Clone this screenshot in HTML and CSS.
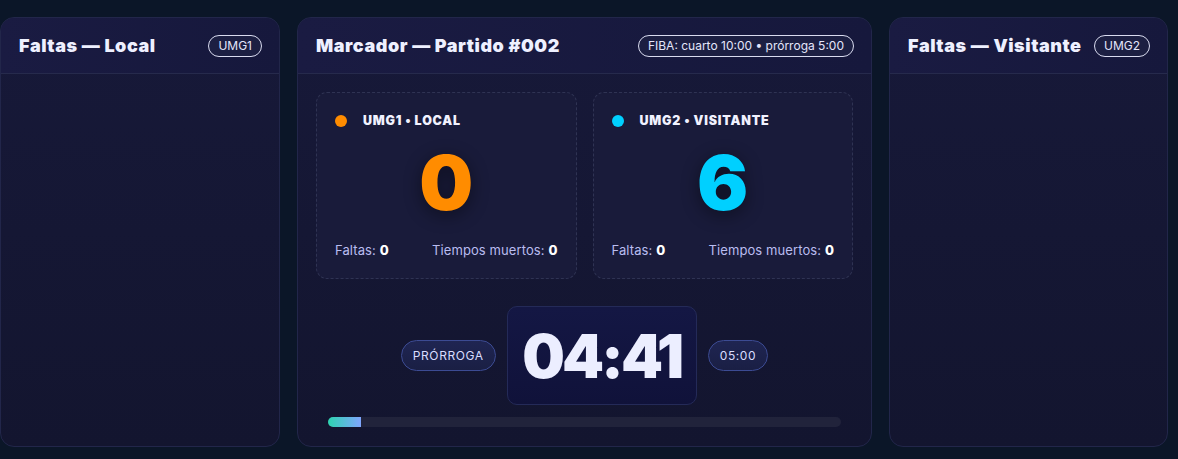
FILE: index.html
```html
<!DOCTYPE html>
<html lang="es">
<head>
<meta charset="utf-8">
<title>Marcador</title>
<link rel="stylesheet" href="styles.css">
</head>
<body>
<main class="layout">
  <section class="panel side">
    <header class="panel-head">
      <h2 class="panel-title">Faltas — Local</h2>
      <span class="chip">UMG1</span>
    </header>
    <div class="panel-body"></div>
  </section>

  <section class="panel center">
    <header class="panel-head">
      <h2 class="panel-title">Marcador — Partido #002</h2>
      <span class="chip">FIBA: cuarto 10:00 • prórroga 5:00</span>
    </header>
    <div class="panel-body board">
      <div class="teams">
        <div class="team">
          <div class="team-name"><span class="dot dot-home"></span>UMG1 • LOCAL</div>
          <div class="score score-home">0</div>
          <div class="team-stats">
            <span>Faltas: <b>0</b></span>
            <span>Tiempos muertos: <b>0</b></span>
          </div>
        </div>
        <div class="team">
          <div class="team-name"><span class="dot dot-away"></span>UMG2 • VISITANTE</div>
          <div class="score score-away">6</div>
          <div class="team-stats">
            <span>Faltas: <b>0</b></span>
            <span>Tiempos muertos: <b>0</b></span>
          </div>
        </div>
      </div>
      <div class="clock-row">
        <span class="pill">PRÓRROGA</span>
        <div class="clock">04:41</div>
        <span class="pill">05:00</span>
      </div>
      <div class="progress"><div class="progress-fill" style="width:6.4%"></div></div>
    </div>
  </section>

  <section class="panel side">
    <header class="panel-head">
      <h2 class="panel-title">Faltas — Visitante</h2>
      <span class="chip">UMG2</span>
    </header>
    <div class="panel-body"></div>
  </section>
</main>
</body>
</html>
```

FILE: styles.css
```css
* { box-sizing: border-box; }
html, body { height: 100%; }
body {
  margin: 0;
  background: #0b1628;
  font-family: "Inter", "Noto Sans", sans-serif;
  color: #e9ebff;
  overflow: hidden;
}
.layout {
  display: grid;
  grid-template-columns: 280px 575px 279px;
  gap: 17px;
  padding: 17px 0 12px 0;
  height: 459px;
}
.panel {
  display: flex;
  flex-direction: column;
  background: linear-gradient(180deg, #171939 0%, #13152f 100%);
  border: 1px solid #22264a;
  border-radius: 14px;
  overflow: hidden;
}
.panel-head {
  display: flex;
  align-items: center;
  justify-content: space-between;
  height: 56px;
  padding: 0 17px 0 18px;
  border-bottom: 1px solid #262a4c;
  background: linear-gradient(90deg, #1a1b42 0%, #16183c 100%);
}
.panel-title {
  margin: 0;
  font-size: 18px;
  font-weight: 900;
  letter-spacing: 0.55px;
  color: #eef0ff;
}
.chip {
  border: 1px solid #d9dbef;
  border-radius: 999px;
  padding: 2px 9px;
  font-size: 12px;
  line-height: 16px;
  color: #e4e6fb;
  background: #1c1f42;
}
.panel-body { flex: 1; }
.board {
  padding: 18px 18px 0 18px;
  display: flex;
  flex-direction: column;
}
.teams {
  display: grid;
  grid-template-columns: 1fr 1fr;
  gap: 16px;
}
.team {
  height: 187px;
  border: 1px dashed #2f3353;
  border-radius: 11px;
  background: #191b3a;
  padding: 20px 18px 0 18px;
  display: flex;
  flex-direction: column;
}
.team-name {
  display: flex;
  align-items: center;
  gap: 16px;
  font-size: 12.5px;
  font-weight: 900;
  letter-spacing: 0.8px;
  color: #f1f2ff;
}
.dot { width: 12px; height: 12px; border-radius: 50%; display: inline-block; }
.dot-home { background: #ff8c00; }
.dot-away { background: #00d0ff; }
.score {
  text-align: center;
  font-size: 76px;
  font-weight: 900;
  line-height: 1;
  margin-top: 16px;
  text-shadow: 0 4px 18px rgba(0,0,0,0.45);
}
.score-home { color: #ff8c00; }
.score-away { color: #00d0ff; }
.team-stats {
  margin-top: auto;
  margin-bottom: 20px;
  display: flex;
  justify-content: space-between;
  font-size: 13px;
  letter-spacing: 0.1px;
  color: #b9bdf0;
}
.team-stats b { color: #ffffff; font-weight: 800; }
.clock-row {
  margin-top: 27px;
  display: flex;
  align-items: center;
  justify-content: center;
  gap: 11px;
}
.pill {
  height: 31px;
  display: inline-flex;
  align-items: center;
  padding: 0 11px;
  border-radius: 999px;
  border: 1px solid #3c4b93;
  background: linear-gradient(180deg, #1f2552 0%, #1a1f44 100%);
  font-size: 12px;
  letter-spacing: 0.6px;
  color: #d9ddff;
}
.clock {
  width: 190px;
  height: 99px;
  display: flex;
  align-items: center;
  justify-content: center;
  border: 1px solid #242a58;
  border-radius: 10px;
  background: linear-gradient(180deg, #141744 0%, #10123a 100%);
  font-size: 60px;
  font-weight: 900;
  color: #eceeff;
  letter-spacing: -2.8px;
}
.progress {
  margin: 12px 12px 0 12px;
  height: 10px;
  border-radius: 6px;
  background: #21233b;
  overflow: hidden;
}
.progress-fill {
  height: 100%;
  background: linear-gradient(90deg, #2dd4b0 0%, #80a6ff 100%);
}
```
